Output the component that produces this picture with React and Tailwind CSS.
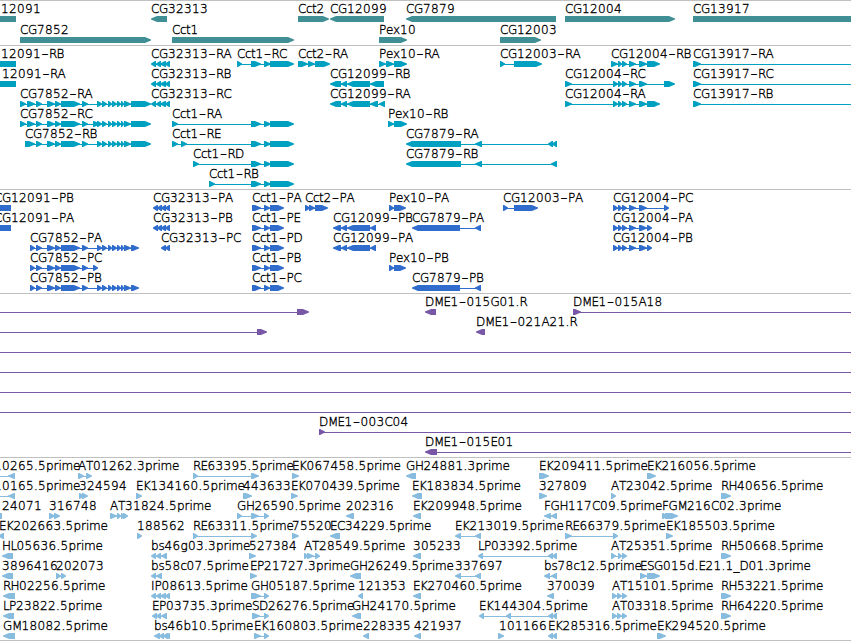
import React from 'react';

// glyph advances of the label font, in px
const ADVANCE = {
  A: 8, B: 7, C: 8, D: 9, E: 7, F: 6.5, G: 9, H: 8.5, I: 3.5, K: 7.5, L: 6, M: 9.5, P: 7, R: 7.5, S: 7, T: 7,
  b: 7.5, c: 6, d: 7.5, e: 7, g: 7.5, i: 3, m: 11.5, p: 7.5, r: 5, s: 6, t: 4.5, x: 7,
  '.': 4, _: 6, '-': 8,
};

const CCT1 = [[251, 261], [264, 271], [270, 294]];
const CCT1_P = [[252, 261], [264, 270], [270, 284]];
const CG32313 = [[151, 156], [156, 161], [160, 166], [165, 170]];
const CG32313_P = [[153, 158], [157, 162], [161, 166], [165, 170]];
const CG7852_MID = [[36, 42], [47, 55], [55, 61], [61, 80], [82, 88]];
const CG7852_END = [[97, 102], [102, 107], [108, 112], [112, 117], [117, 121], [121, 124], [124, 131]];
const CG12004_MID = [[618, 622], [622, 627], [629, 636], [639, 647]];
const CG12099_P = [[333, 341], [341, 347], [347, 370], [370, 376]];
const FULL = [0, 851];

// feature: label, label x, strand, exons, optional connector range
const f = (name, x, dir, exons, conn) => ({ name, x, dir, exons, conn });

const tracks = [
  {
    id: 'genes', color: '#408f95', height: 'h-[45px]', rowHeight: 21,
    rows: [
      [
        f('12091', 1, 'b', [[-20, 16]]),
        f('CG32313', 151, 'l', [[151, 167]]),
        f('Cct2', 298, 'r', [[298, 329]]),
        f('CG12099', 330, 'l', [[330, 384]]),
        f('CG7879', 406, 'l', [[406, 556]]),
        f('CG12004', 565, 'r', [[565, 675]]),
        f('CG13917', 693, 'b', [[693, 860]]),
      ],
      [
        f('CG7852', 20, 'r', [[20, 151]]),
        f('Cct1', 172, 'r', [[172, 294]]),
        f('Pex10', 379, 'r', [[379, 407]]),
        f('CG12003', 500, 'r', [[500, 541]]),
      ],
    ],
  },
  {
    id: 'transcripts', color: '#00a0c0', height: 'h-[144px]', rowHeight: 20,
    rows: [
      [
        f('12091-RB', 1, 'b', [[-20, 16]]),
        f('CG32313-RA', 151, 'l', CG32313),
        f('Cct1-RC', 237, 'r', [[237, 242], ...CCT1]),
        f('Cct2-RA', 298, 'r', [[298, 308], [308, 315], [315, 330]]),
        f('Pex10-RA', 379, 'r', [[379, 386], [386, 394], [394, 407]]),
        f('CG12003-RA', 500, 'r', [[500, 505], [514, 542]]),
        f('CG12004-RB', 611, 'r', [[611, 618], ...CG12004_MID, [647, 660]]),
        f('CG13917-RA', 693, 'r', [[693, 701]], [693, 851]),
      ],
      [
        f('12091-RA', 2, 'b', [[-20, 16]]),
        f('CG32313-RB', 151, 'l', CG32313),
        f('CG12099-RB', 330, 'l', [[330, 341], [341, 347], [347, 370], [370, 384]]),
        f('CG12004-RC', 565, 'r', [[565, 572], [613, 618], ...CG12004_MID, [664, 675]]),
        f('CG13917-RC', 693, 'r', [[693, 701]], [693, 851]),
      ],
      [
        f('CG7852-RA', 20, 'r', [[20, 26], [27, 35], ...CG7852_MID, ...CG7852_END, [131, 151]]),
        f('CG32313-RC', 151, 'l', CG32313),
        f('CG12099-RA', 330, 'l', [[330, 341], [341, 347], [347, 370], [370, 378], [379, 385]]),
        f('CG12004-RA', 565, 'r', [[565, 572], [613, 618], ...CG12004_MID, [647, 660]]),
        f('CG13917-RB', 693, 'r', [[693, 701]], [693, 851]),
      ],
      [
        f('CG7852-RC', 20, 'r', [[20, 26], [27, 35], ...CG7852_MID, [93, 100], ...CG7852_END, [131, 151]]),
        f('Cct1-RA', 172, 'r', [[172, 178], ...CCT1]),
        f('Pex10-RB', 388, 'r', [[388, 394], [394, 407]]),
      ],
      [
        f('CG7852-RB', 25, 'r', [[25, 35], ...CG7852_MID, ...CG7852_END, [131, 151]]),
        f('Cct1-RE', 172, 'r', [[172, 178], [181, 187], ...CCT1]),
        f('CG7879-RA', 406, 'l', [[406, 461], [475, 482], [548, 553], [552, 557]]),
      ],
      [
        f('Cct1-RD', 193, 'r', [[193, 199], ...CCT1]),
        f('CG7879-RB', 406, 'l', [[406, 461], [475, 482], [551, 557]]),
      ],
      [f('Cct1-RB', 209, 'r', [[209, 215], ...CCT1])],
    ],
  },
  {
    id: 'proteins', color: '#2f6ccb', height: 'h-[104px]', rowHeight: 20,
    rows: [
      [
        f('CG12091-PB', -6, 'b', [[-10, 11]]),
        f('CG32313-PA', 153, 'l', CG32313_P),
        f('Cct1-PA', 252, 'r', CCT1_P),
        f('Cct2-PA', 305, 'r', [[305, 310], [309, 315], [315, 328]]),
        f('Pex10-PA', 389, 'r', [[389, 394], [394, 406]]),
        f('CG12003-PA', 503, 'r', [[503, 508], [514, 538]]),
        f('CG12004-PC', 613, 'r', [[613, 618], ...CG12004_MID, [664, 669]]),
      ],
      [
        f('CG12091-PA', -6, 'b', [[-10, 11]]),
        f('CG32313-PB', 153, 'l', CG32313_P),
        f('Cct1-PE', 252, 'r', CCT1_P),
        f('CG12099-PB', 333, 'l', CG12099_P),
        f('CG7879-PA', 412, 'l', [[412, 460], [475, 481]]),
        f('CG12004-PA', 613, 'r', [[613, 618], ...CG12004_MID, [647, 652]]),
      ],
      [
        f('CG7852-PA', 30, 'r', [[30, 35], ...CG7852_MID, ...CG7852_END, [131, 139]]),
        f('CG32313-PC', 161, 'l', [[161, 166], [165, 170]]),
        f('Cct1-PD', 252, 'r', CCT1_P),
        f('CG12099-PA', 333, 'l', CG12099_P),
        f('CG12004-PB', 613, 'r', [[613, 618], ...CG12004_MID, [647, 652]]),
      ],
      [
        f('CG7852-PC', 30, 'r', [[30, 35], ...CG7852_MID, [93, 98]]),
        f('Cct1-PB', 252, 'r', CCT1_P),
        f('Pex10-PB', 389, 'r', [[389, 394], [394, 406]]),
      ],
      [
        f('CG7852-PB', 30, 'r', [[30, 35], ...CG7852_MID, ...CG7852_END, [131, 139]]),
        f('Cct1-PC', 252, 'r', CCT1_P),
        f('CG7879-PB', 412, 'l', [[412, 460], [475, 481]]),
      ],
    ],
  },
  {
    id: 'clones', color: '#7858a6', height: 'h-[164px]', rowHeight: 20,
    rows: [
      [
        f('', 0, 'r', [[297, 309]], [0, 300]),
        f('DME1-015G01.R', 425, 'l', [[425, 436]]),
        f('DME1-015A18', 573, 'r', [[573, 581]], [573, 851]),
      ],
      [
        f('', 0, 'r', [[257, 267]], [0, 260]),
        f('DME1-021A21.R', 476, 'l', [[476, 485]]),
      ],
      [f('', 0, 'r', [], FULL)],
      [f('', 0, 'r', [], FULL)],
      [f('', 0, 'r', [], FULL)],
      [f('', 0, 'r', [], FULL)],
      [f('DME1-003C04', 319, 'r', [[319, 325]], [319, 851])],
      [f('DME1-015E01', 425, 'l', [[425, 437]], [430, 851])],
    ],
  },
  {
    id: 'ests', color: '#87bcde', height: 'h-[183px]', rowHeight: 20,
    rows: [
      [
        f('10265.5prime', -6, 'l', [[8, 15]], [0, 15]),
        f('AT01262.3prime', 78, 'r', [[78, 84], [86, 92]]),
        f('RE63395.5prime', 193, 'r', [[193, 198], [251, 259]]),
        f('EK067458.5prime', 292, 'r', [[292, 299]]),
        f('GH24881.3prime', 406, 'l', [[406, 416]]),
        f('EK209411.5prime', 539, 'r', [[539, 549]]),
        f('EK216056.5prime', 647, 'r', [[647, 656]]),
      ],
      [
        f('10165.5prime', -6, 'l', [[8, 15]], [0, 15]),
        f('324594', 79, 'r', [[79, 84], [82, 88]]),
        f('EK134160.5prime', 136, 'r', [[136, 142]]),
        f('443633', 243, 'r', [[243, 252]]),
        f('EK070439.5prime', 291, 'r', [[291, 298]]),
        f('EK183834.5prime', 412, 'l', [[412, 422]]),
        f('327809', 539, 'r', [[539, 547]]),
        f('AT23042.5prime', 611, 'r', [[611, 616]]),
        f('RH40656.5prime', 721, 'r', [[721, 731]]),
      ],
      [
        f('24071', 2, 'b', [[-5, 2]]),
        f('316748', 49, 'r', [[49, 55], [54, 60]]),
        f('AT31824.5prime', 110, 'r', [[110, 117], [117, 121], [121, 124], [123, 128]]),
        f('GH26590.5prime', 237, 'r', [[237, 242], [251, 259], [264, 269]]),
        f('202316', 346, 'l', [[346, 354]]),
        f('EK209948.5prime', 413, 'l', [[413, 421]]),
        f('FGH117C09.5prime', 544, 'l', [[544, 551], [551, 557]]),
        f('FGM216C02.3prime', 662, 'r', [[662, 668], [665, 678]]),
      ],
      [
        f('EK202663.5prime', -1, 'l', [[-2, 4]]),
        f('188562', 137, 'r', [[137, 142]]),
        f('RE63311.5prime', 193, 'r', [[193, 198], [251, 257]]),
        f('75520', 292, 'r', [[292, 299]]),
        f('EC34229.5prime', 330, 'l', [[330, 340]]),
        f('EK213019.5prime', 455, 'l', [[455, 461], [475, 481]]),
        f('RE66379.5prime', 565, 'r', [[565, 572], [613, 618]]),
        f('EK185503.5prime', 666, 'r', [[666, 673]]),
      ],
      [
        f('HL05636.5prime', 2, 'l', [[2, 13]]),
        f('bs46g03.3prime', 151, 'l', [[151, 156], [156, 161], [161, 167]]),
        f('527384', 249, 'r', [[249, 256]]),
        f('AT28549.5prime', 304, 'r', [[304, 308], [307, 314], [315, 320]]),
        f('305233', 413, 'l', [[413, 421]]),
        f('LP03392.5prime', 478, 'l', [[478, 483], [548, 553], [552, 557]]),
        f('AT25351.5prime', 611, 'r', [[611, 616], [618, 622], [622, 627]]),
        f('RH50668.5prime', 721, 'r', [[721, 731]]),
      ],
      [
        f('3896416', 2, 'l', [[2, 13]]),
        f('202073', 56, 'r', [[56, 61], [61, 66]]),
        f('bs58c07.5prime', 151, 'l', [[151, 156], [156, 162]]),
        f('EP21727.3prime', 250, 'r', [[250, 257]]),
        f('GH26249.5prime', 350, 'l', [[350, 361]]),
        f('337697', 455, 'l', [[455, 461], [475, 481]]),
        f('bs78c12.5prime', 544, 'l', [[544, 550], [551, 557]]),
        f('ESG015d.E21.1_D01.3prime', 640, 'r', [[640, 647], [647, 660]]),
      ],
      [
        f('RH02256.5prime', 3, 'l', [[3, 15]]),
        f('IP08613.5prime', 151, 'l', CG32313),
        f('GH05187.5prime', 251, 'r', [[251, 261], [264, 269]]),
        f('121353', 358, 'l', [[358, 363]]),
        f('EK270460.5prime', 413, 'l', [[413, 421]]),
        f('370039', 547, 'l', [[547, 554]]),
        f('AT15101.5prime', 612, 'r', [[612, 617], [617, 622], [622, 627]]),
        f('RH53221.5prime', 721, 'r', [[721, 731]]),
      ],
      [
        f('LP23822.5prime', 3, 'l', [[3, 14]]),
        f('EP03735.3prime', 152, 'l', [[152, 157], [156, 161], [161, 167]]),
        f('SD26276.5prime', 252, 'r', [[252, 260], [264, 269]]),
        f('GH24170.5prime', 352, 'l', [[352, 361]]),
        f('EK144304.5prime', 479, 'l', [[479, 484], [506, 511], [548, 553], [552, 557]]),
        f('AT03318.5prime', 612, 'r', [[612, 617], [617, 622], [622, 627]]),
        f('RH64220.5prime', 721, 'r', [[721, 731]]),
      ],
      [
        f('GM18082.5prime', 3, 'l', [[3, 15]]),
        f('bs46b10.5prime', 154, 'l', [[154, 160], [159, 164], [163, 168], [165, 170]]),
        f('EK160803.5prime', 254, 'r', [[254, 261], [264, 269]]),
        f('228335', 363, 'l', [[363, 369]]),
        f('421937', 414, 'l', [[414, 421]]),
        f('101166', 499, 'r', [[498, 504]]),
        f('EK285316.5prime', 548, 'l', [[548, 553], [552, 557]]),
        f('EK294520.5prime', 657, 'r', [[657, 666]]),
      ],
    ],
  },
];

const exonPoints = (dir, [s, e]) => {
  if (dir === 'r') {
    const n = Math.max(s + 1, e - 6);
    return `${s},15 ${n},15 ${e},17.5 ${e},18.5 ${n},21 ${s},21`;
  }
  if (dir === 'l') {
    const n = Math.min(e - 1, s + 6);
    return `${e},15 ${n},15 ${s},17.5 ${s},18.5 ${n},21 ${e},21`;
  }
  return `${s},15 ${e},15 ${e},21 ${s},21`;
};

const Label = ({ text, x }) => {
  const xs = [];
  let pos = x;
  for (const ch of text) {
    xs.push(pos);
    pos += ADVANCE[ch] || 8;
  }
  const dash = text.indexOf('-');
  if (dash < 0) {
    return <text x={xs.join(' ')} y="12">{text}</text>;
  }
  // the hyphen is drawn wider than the font has it
  return (
    <text y="12">
      <tspan x={xs.slice(0, dash).join(' ')}>{text.slice(0, dash)}</tspan>
      <tspan x={xs[dash] + 0.5} textLength="7" lengthAdjust="spacingAndGlyphs">-</tspan>
      <tspan x={xs.slice(dash + 1).join(' ')}>{text.slice(dash + 1)}</tspan>
    </text>
  );
};

const Feature = ({ feature, color }) => {
  const { name, x, dir, exons, conn } = feature;
  const range = conn || [exons[0][0] + 2, exons[exons.length - 1][1] - 2];
  return (
    <g>
      {(conn || exons.length > 1) && (
        <rect x={range[0]} y="18" width={range[1] - range[0]} height="1" fill={color} />
      )}
      {exons.map((exon) => (
        <polygon key={exon[0]} points={exonPoints(dir, exon)} fill={color} />
      ))}
      {name && (
        <g stroke="#000" strokeWidth="0.35">
          <Label text={name} x={x} />
        </g>
      )}
    </g>
  );
};

const Track = ({ track }) => (
  <section className={`border-t border-[#c0c0c0] ${track.height}`}>
    {track.rows.map((row, i) => (
      <svg key={i} width="851" height={track.rowHeight} className="block overflow-visible" fill="#000">
        {row.map((feature, j) => (
          <Feature key={j} feature={feature} color={track.color} />
        ))}
      </svg>
    ))}
  </section>
);

const App = () => {
  return (
    <div className="w-[851px] h-[641px] overflow-hidden bg-white border-b border-[#c0c0c0] font-['DejaVu_Sans','DejaVu_Sans_Light',sans-serif] font-extralight text-[12px]">
      {tracks.map((track) => (
        <Track key={track.id} track={track} />
      ))}
    </div>
  );
};

export default App;
